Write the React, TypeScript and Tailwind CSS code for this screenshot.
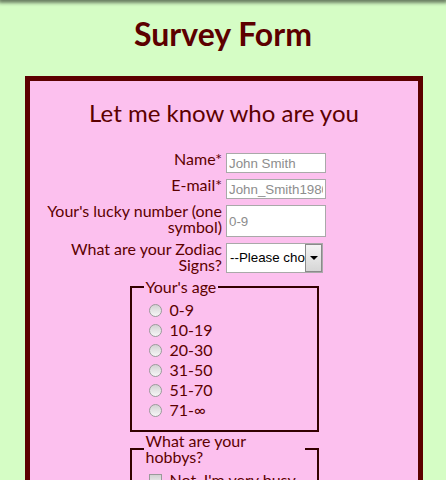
const ages = ['0-9', '10-19', '20-30', '31-50', '51-70', '71-∞'];
const hobbies = ["Not, I'm very busy", 'Sports', 'Music', 'Reading', 'Travelling'];

const inputCls =
  "h-5 w-[100px] border border-[#a9a9a9] bg-white px-0.5 font-['Liberation_Sans',Arial,sans-serif] text-[13.33px] text-black outline-none placeholder:text-[#8d8d8d]";

const Label = ({ htmlFor, children }: { htmlFor: string; children: React.ReactNode }) => (
  <label htmlFor={htmlFor} className="-mt-0.5 text-right text-base leading-4">
    {children}
  </label>
);

const App = () => {
  return (
    <div className="min-h-screen bg-[#d5fdc5] pb-10 font-['Lato',sans-serif] text-[#5c0000]">
      <div className="h-0 shadow-[0_0_4px_2px_rgba(0,0,0,0.75)]" />
      <h1 className="pt-[18px] text-center text-[32px] font-bold leading-8">Survey Form</h1>

      <form className="ml-[25px] mt-[26px] w-[398px] border-[5px] border-[#5c0000] bg-[#fcc0ee] pb-6 pt-5">
        <h2 className="text-center text-2xl leading-6">Let me know who are you</h2>

        <div className="mt-7 grid grid-cols-2 gap-x-1 gap-y-1.5">
          <Label htmlFor="name">Name*</Label>
          <input id="name" type="text" placeholder="John Smith" className={inputCls} />

          <Label htmlFor="email">E-mail*</Label>
          <input id="email" type="email" placeholder="John_Smith1980@gmail.com" className={inputCls} />

          <Label htmlFor="number">Your's lucky number (one symbol)</Label>
          <input id="number" type="text" maxLength={1} placeholder="0-9" className={inputCls + ' !h-8'} />

          <Label htmlFor="zodiac">What are your Zodiac Signs?</Label>
          <div className="relative h-[30px] w-[97px]">
            <select
              id="zodiac"
              className="h-full w-full appearance-none border border-[#a9a9a9] bg-white pl-[3px] font-['Liberation_Sans',Arial,sans-serif] text-[13.33px] text-black outline-none"
            >
              <option>--Please choose--</option>
              <option>Aries</option>
              <option>Taurus</option>
              <option>Gemini</option>
            </select>
            <span className="pointer-events-none absolute right-[1px] top-[1px] flex h-[28px] w-[17px] items-center justify-center border border-[#8a8a8a] bg-gradient-to-b from-[#f4f4f4] to-[#d6d6d6]">
              <span className="h-0 w-0 border-x-[4px] border-t-[4px] border-x-transparent border-t-black" />
            </span>
          </div>
        </div>

        <fieldset className="mx-auto mt-1.5 w-[189px] border-2 border-[#330000] px-3 pb-2.5 pt-[5px]">
          <legend className="px-0.5 text-base leading-4">Your's age</legend>
          {ages.map((age) => (
            <label key={age} className="flex h-5 items-center text-base leading-5">
              <input
                type="radio"
                name="age"
                value={age}
                className="ml-[5px] mr-2 h-[13px] w-[13px] appearance-none rounded-full border border-[#9a9a9a] bg-gradient-to-b from-[#d2d2d2] to-[#f7f7f7]"
              />
              {age}
            </label>
          ))}
        </fieldset>

        <fieldset className="mx-auto mt-px w-[189px] border-2 border-[#330000] px-3 pb-2.5 pt-[5px]">
          <legend className="w-full px-0.5 text-base leading-4">
            What are your
            <br />
            hobbys?
          </legend>
          {hobbies.map((hobby) => (
            <label key={hobby} className="flex h-5 items-center whitespace-nowrap text-base leading-5">
              <input
                type="checkbox"
                value={hobby}
                className="ml-[5px] mr-2 h-[13px] w-[13px] shrink-0 appearance-none border border-[#9a9a9a] bg-gradient-to-b from-[#d2d2d2] to-[#f7f7f7]"
              />
              {hobby}
            </label>
          ))}
        </fieldset>
      </form>
    </div>
  );
};

export default App;
